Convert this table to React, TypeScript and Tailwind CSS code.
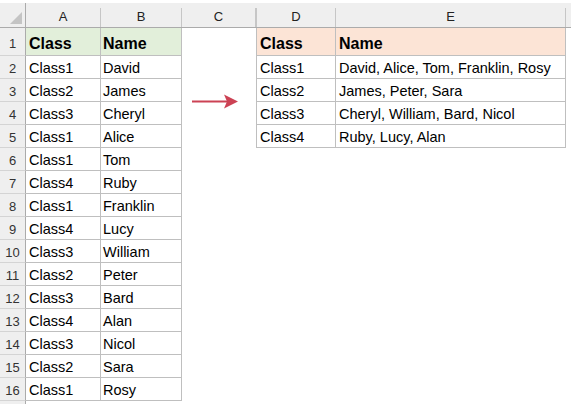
import React from 'react'

const left = [
  ['Class1', 'David'],
  ['Class2', 'James'],
  ['Class3', 'Cheryl'],
  ['Class1', 'Alice'],
  ['Class1', 'Tom'],
  ['Class4', 'Ruby'],
  ['Class1', 'Franklin'],
  ['Class4', 'Lucy'],
  ['Class3', 'William'],
  ['Class2', 'Peter'],
  ['Class3', 'Bard'],
  ['Class4', 'Alan'],
  ['Class3', 'Nicol'],
  ['Class2', 'Sara'],
  ['Class1', 'Rosy'],
]

const right = [
  ['Class1', 'David, Alice, Tom, Franklin, Rosy'],
  ['Class2', 'James, Peter, Sara'],
  ['Class3', 'Cheryl, William, Bard, Nicol'],
  ['Class4', 'Ruby, Lucy, Alan'],
]

const cols = [
  { key: 'A', w: 'w-[75px]' },
  { key: 'B', w: 'w-[81px]' },
  { key: 'C', w: 'w-[74px]' },
  { key: 'D', w: 'w-[80px]' },
  { key: 'E', w: 'w-[230px]' },
]

function RowNum({ n, tall }: { n?: number; tall?: boolean }) {
  return (
    <div
      className={`flex w-[26px] shrink-0 items-center justify-center border-r border-b border-r-[#ababab] border-b-[#d4d4d4] bg-[#efefef] text-[13px] text-[#333] ${
        tall ? 'h-[28px] pt-[5px]' : 'h-[23px] pt-[3px]'
      }`}
    >
      {n}
    </div>
  )
}

export default function App() {
  return (
    <div className="relative h-[404px] w-[571px] overflow-hidden bg-white font-['Liberation_Sans',Arial,sans-serif] text-black">
      {/* column letters */}
      <div className="mt-[3px] flex h-[25px] border-b border-[#ababab] bg-[#efefef]">
        <div className="relative w-[26px] shrink-0 border-r border-[#ababab]">
          <svg className="absolute left-[10px] top-[9px]" width="12" height="12" viewBox="0 0 12 12">
            <polygon points="12,0 12,12 0,12" fill="#c4c4c4" />
          </svg>
        </div>
        {cols.map((c) => (
          <div key={c.key} className={`${c.w} shrink-0 pt-[5px]`}>
            <div
              className={`flex h-full items-center justify-center border-r border-[#c6c6c6] pb-[1px] text-[13px] text-[#222] ${
                c.key === 'D' ? 'border-l' : ''
              }`}
            >
              {c.key}
            </div>
          </div>
        ))}
      </div>

      {/* header row */}
      <div className="flex">
        <RowNum n={1} tall />
        <div className="flex h-[28px] w-[75px] shrink-0 items-center border-r border-b border-[#bfbfbf] bg-[#e2efda] pt-[5px] pl-[3px] text-[16px] font-bold">
          Class
        </div>
        <div className="flex h-[28px] w-[81px] shrink-0 items-center border-r border-b border-[#bfbfbf] bg-[#e2efda] pt-[5px] pl-[2px] text-[16px] font-bold">
          Name
        </div>
        <div className="h-[28px] w-[74px] shrink-0" />
        <div className="flex h-[28px] w-[80px] shrink-0 items-center border-x border-b border-[#bfbfbf] bg-[#fce4d6] pt-[5px] pl-[3px] text-[16px] font-bold">
          Class
        </div>
        <div className="flex h-[28px] w-[230px] shrink-0 items-center border-r border-b border-[#bfbfbf] bg-[#fce4d6] pt-[5px] pl-[3px] text-[16px] font-bold">
          Name
        </div>
      </div>

      {/* data rows */}
      {left.map(([cls, name], i) => {
        const r = right[i]
        return (
          <div key={i} className="flex text-[14.5px]">
            <RowNum n={i + 2} />
            <div className="flex h-[23px] w-[75px] shrink-0 items-center border-r border-b border-[#bfbfbf] pt-[3px] pl-[3px]">
              {cls}
            </div>
            <div className="flex h-[23px] w-[81px] shrink-0 items-center border-r border-b border-[#bfbfbf] pt-[3px] pl-[2px]">
              {name}
            </div>
            <div className="h-[23px] w-[74px] shrink-0" />
            {r && (
              <>
                <div className="flex h-[23px] w-[80px] shrink-0 items-center border-x border-b border-[#bfbfbf] pt-[3px] pl-[3px]">
                  {r[0]}
                </div>
                <div className="flex h-[23px] w-[230px] shrink-0 items-center whitespace-nowrap border-r border-b border-[#bfbfbf] pt-[3px] pl-[3px]">
                  {r[1]}
                </div>
              </>
            )}
          </div>
        )
      })}
      <div className="flex">
        <RowNum />
      </div>

      {/* arrow */}
      <svg className="absolute left-[192px] top-[94px]" width="47" height="15" viewBox="0 0 47 15">
        <line x1="0" y1="7.5" x2="36" y2="7.5" stroke="#cc4254" strokeWidth="2" />
        <polygon points="32,0.5 46,7.5 32,14.5 35,7.5" fill="#cc4254" />
      </svg>
    </div>
  )
}
